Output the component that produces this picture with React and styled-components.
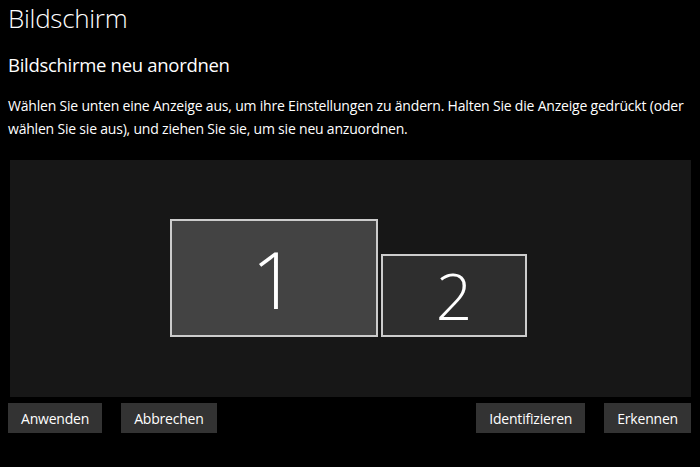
import styled, { createGlobalStyle } from "styled-components";

const GlobalStyle = createGlobalStyle`
  html, body {
    margin: 0;
    padding: 0;
    background: #000000;
  }
  body {
    font-family: "Open Sans", "Noto Sans", sans-serif;
    color: #ffffff;
  }
`;

export default function App() {
  return (
    <>
      <GlobalStyle />
      <Page>
        <Title>Bildschirm</Title>
        <Subtitle>Bildschirme neu anordnen</Subtitle>
        <Description>
          Wählen Sie unten eine Anzeige aus, um ihre Einstellungen zu ändern. Halten Sie die Anzeige gedrückt (oder
          wählen Sie sie aus), und ziehen Sie sie, um sie neu anzuordnen.
        </Description>

        <Arrangement>
          <Monitor $w={208} $h={118} $active>
            <MonitorNumber $size={80}>1</MonitorNumber>
          </Monitor>
          <Monitor $w={146} $h={83}>
            <MonitorNumber $size={64}>2</MonitorNumber>
          </Monitor>
        </Arrangement>

        <ButtonBar>
          <ButtonGroup>
            <Button>Anwenden</Button>
            <Button>Abbrechen</Button>
          </ButtonGroup>
          <ButtonGroup>
            <Button>Identifizieren</Button>
            <Button>Erkennen</Button>
          </ButtonGroup>
        </ButtonBar>
      </Page>
    </>
  );
}

const Page = styled.div`
  width: 700px;
  height: 467px;
  box-sizing: border-box;
  padding: 0 9px 0 8px;
  display: flex;
  flex-direction: column;
  overflow: hidden;
`;

const Title = styled.h1`
  margin: 0;
  font-size: 26px;
  font-weight: 300;
  line-height: 36px;
  letter-spacing: -0.3px;
`;

const Subtitle = styled.h2`
  margin: 16px 0 0;
  font-size: 18.5px;
  font-weight: 400;
  line-height: 26px;
  letter-spacing: -0.3px;
`;

const Description = styled.p`
  margin: 16px 0 0;
  font-size: 14px;
  line-height: 23px;
  letter-spacing: -0.2px;
  white-space: pre-line;
`;

const Arrangement = styled.div`
  margin: 20px 0 0 2px;
  height: 237px;
  background: #171717;
  display: flex;
  justify-content: center;
  align-items: flex-end;
  gap: 3px;
  padding: 0 4px 60px 0;
  box-sizing: border-box;
`;

const Monitor = styled.div`
  width: ${(p) => p.$w}px;
  height: ${(p) => p.$h}px;
  box-sizing: border-box;
  border: 2px solid #cccccc;
  background: ${(p) => (p.$active ? "#434343" : "#2e2e2e")};
  display: flex;
  align-items: center;
  justify-content: center;
`;

const MonitorNumber = styled.span`
  font-size: ${(p) => p.$size}px;
  font-weight: 300;
  line-height: 1;
  color: #ffffff;
`;

const ButtonBar = styled.div`
  margin-top: 6px;
  display: flex;
  justify-content: space-between;
`;

const ButtonGroup = styled.div`
  display: flex;
  gap: 19px;
`;

const Button = styled.button`
  height: 30px;
  padding: 0 13px;
  border: none;
  background: #333333;
  color: #ffffff;
  font-family: "Open Sans", "Noto Sans", sans-serif;
  font-size: 14px;
  letter-spacing: -0.2px;
  cursor: pointer;
`;
